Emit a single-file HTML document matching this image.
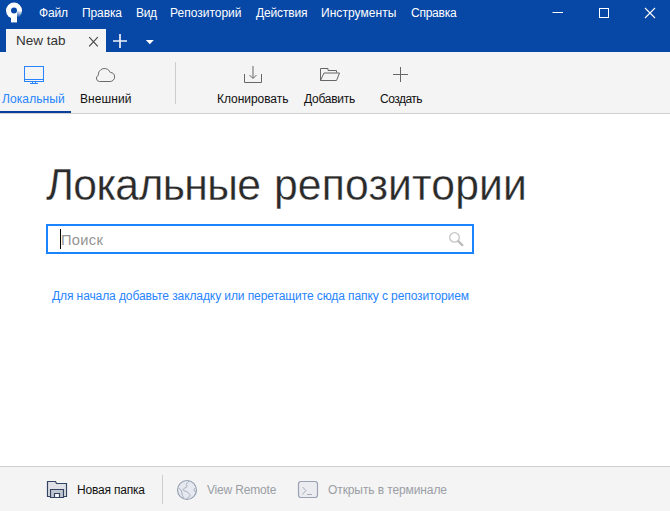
<!DOCTYPE html>
<html lang="ru"><head><meta charset="utf-8"><title>Sourcetree</title>
<style>
html,body{margin:0;padding:0;}
body{width:670px;height:511px;overflow:hidden;background:#fff;font-family:"Liberation Sans",sans-serif;font-size:12px;color:#222;position:relative;}
.abs{position:absolute;white-space:nowrap;}
#title{left:0;top:0;width:670px;height:52px;background:#0747a6;}
.menu{color:#fff;font-size:12px;top:6px;line-height:14px;}
#tab{left:6px;top:29px;width:100px;height:23px;background:#f4f4f4;}
#toolbar{left:0;top:52px;width:670px;height:61px;background:#f4f4f4;border-bottom:1px solid #cfcfcf;}
.tl{font-size:12px;line-height:14px;top:92px;color:#111;}
.h1{top:160px;font-size:42.670px;line-height:50px;color:#2a2a2a;-webkit-text-stroke:0.300px #fff;transform:scaleY(1.035);transform-origin:0 40px;}
#bottom{left:0;top:466px;width:670px;height:45px;background:#f4f4f4;border-top:1px solid #cfcfcf;}
.bt{top:483px;font-size:12px;line-height:14px;}
</style></head><body>
<div id="title" class="abs"></div>
<svg class="abs" style="left:0;top:0" width="30" height="28" viewBox="0 0 30 28">
<defs><linearGradient id="lg" gradientUnits="userSpaceOnUse" x1="19.500" y1="10.500" x2="17.500" y2="17.500"><stop offset="0" stop-color="#0747a6" stop-opacity="0"/><stop offset="1" stop-color="#0747a6" stop-opacity="1"/></linearGradient></defs>
<circle cx="14" cy="10.600" r="8" fill="#fff"/>
<path d="M14 10.600H23V20H14z" fill="url(#lg)"/>
<rect x="11" y="12" width="6" height="10.400" fill="#fff"/>
<circle cx="14" cy="10.400" r="3" fill="#0747a6"/>
</svg>
<div class="abs menu" style="left:39px;letter-spacing:-0.200px">Файл</div>
<div class="abs menu" style="left:82px;letter-spacing:-0.100px">Правка</div>
<div class="abs menu" style="left:136px;letter-spacing:-0.300px">Вид</div>
<div class="abs menu" style="left:170px">Репозиторий</div>
<div class="abs menu" style="left:256px;letter-spacing:-0.150px">Действия</div>
<div class="abs menu" style="left:321px;letter-spacing:0.050px">Инструменты</div>
<div class="abs menu" style="left:411px;letter-spacing:-0.250px">Справка</div>
<svg class="abs" style="left:540px;top:0" width="130" height="28" viewBox="0 0 130 28" fill="none" stroke="#fff" stroke-width="1"><path d="M12.500 12.500h10.500"/><rect x="59.500" y="8.500" width="9" height="9"/><path d="M105 8l10 10M115 8l-10 10" stroke-width="1.100"/></svg>
<div id="tab" class="abs"></div>
<div class="abs" style="left:16px;top:33px;font-size:13.500px;line-height:16px;color:#333">New tab</div>
<svg class="abs" style="left:80px;top:29px" width="80" height="23" viewBox="80 29 80 23" fill="none"><path d="M89.200 37.200l8.600 9.200M97.800 37.200l-8.600 9.200" stroke="#4a4a4a" stroke-width="1.200"/><path d="M113 41h14M120 34v14" stroke="#eef2fa" stroke-width="1.700"/><path d="M145.800 40h8l-4 4.300z" fill="#fff"/></svg>

<div id="toolbar" class="abs"></div>
<div class="abs" style="left:0;top:111px;width:71px;height:2px;background:#0a3f9e"></div>
<div class="abs" style="left:175px;top:62px;width:1px;height:42px;background:#ccc"></div>
<svg class="abs" style="left:0;top:56px" width="440" height="34" viewBox="0 56 440 34" fill="none" stroke="#666" stroke-width="1">
<g stroke="#2684ff"><rect x="24.500" y="66.500" width="19" height="15"/><path d="M24.500 79.500h19M30 83.500h8M32.500 81.500v2M35.500 81.500v2"/></g>
<path d="M99.600 81.500H110.100A4.500 4.500 0 0 0 114.600 77A4.500 4.500 0 0 0 110.30 72.50A6.200 6.200 0 0 0 98.34 75.36A3.200 3.200 0 0 0 99.600 81.500z" stroke="#6a6a6a"/>
<path d="M244.500 74v8.500h17V74M253 66v12" /><path d="M249.500 75l3.500 3.500l3.500-3.500"/>
<path d="M320.500 80.500V68.500H328V70.500H336.500V72.500"/><path d="M320.500 80.500L324 73H339.500L336.500 80.500z"/>
<path d="M393 74.500h15M400.500 67v15"/>
</svg>
<div class="abs tl" style="left:2px;color:#2684ff;letter-spacing:0.100px">Локальный</div>
<div class="abs tl" style="left:80px;letter-spacing:0.100px">Внешний</div>
<div class="abs tl" style="left:217px;letter-spacing:-0.050px">Клонировать</div>
<div class="abs tl" style="left:304px;letter-spacing:-0.250px">Добавить</div>
<div class="abs tl" style="left:380px;letter-spacing:-0.500px">Создать</div>

<div class="abs h1" style="left:46px;letter-spacing:-0.650px">Локальные</div>
<div class="abs h1" style="left:274px;letter-spacing:0.150px">репозитории</div>
<div class="abs" style="left:46px;top:224px;width:424px;height:26px;border:2px solid #1a84ff;background:#fff"></div>
<div class="abs" style="left:60px;top:229px;width:1px;height:20px;background:#000"></div>
<div class="abs" style="left:61px;top:231px;font-size:14.670px;line-height:18px;color:#959595;letter-spacing:0.300px">Поиск</div>
<svg class="abs" style="left:444px;top:228px" width="24" height="22" viewBox="444 228 24 22" fill="none"><circle cx="454.500" cy="237.400" r="4.800" stroke="#c4c4c4" stroke-width="1.300"/><path d="M458.500 241.300l3.800 3.800" stroke="#bdbdbd" stroke-width="2.400" stroke-linecap="round"/></svg>
<div class="abs" style="left:52px;top:289px;font-size:12px;line-height:14px;color:#2684ff;letter-spacing:-0.090px">Для начала добавьте закладку или перетащите сюда папку с репозиторием</div>

<div id="bottom" class="abs"></div>
<svg class="abs" style="left:40px;top:474px" width="290" height="32" viewBox="40 474 290 32" fill="none" stroke-width="1">
<g stroke="#344563" stroke-width="1.200"><path d="M50.500 496.500H47.500V481.500H55.500L56.500 483.500H66.500V496.500H63.500" fill="#dfe1e6"/><path d="M50.500 497.500V489.500H63.500V497.500z" fill="#c1c7d0"/><path d="M54.500 497.500V493.500H59.500V497.500z" fill="#fafafa"/></g>
<g stroke="#a5adba"><circle cx="187" cy="490" r="9.500" fill="#e6e9ef" stroke="#98a2b3" stroke-width="1.150"/><path d="M189 481c-.5 1.800-2.500 2-3 3s1.800 1.200 1 2.500s-4 2-4 3.300s3.800 1.200 5 2.700s2 2 2 3s-1.800 1.500-2.500 2.500s-1 1.300-1.500 1.500M178.500 487.500c.5 1.500 2.500 2 3 3.500s.3 3 1 4.500s1.200 2 1.700 2.700M195.500 487.500c-1 .8-1.500 2-1.300 3s1 1.500 1.800 1.700"/>
<rect x="298.500" y="481.500" width="19" height="16" rx="2.500" fill="#ebecf0" stroke="#98a2b3" stroke-width="1.200"/><path d="M302.500 487l3.500 3.600l-3.500 3.900M307 494.500h5"/></g>
</svg>
<div class="abs bt" style="left:77px;color:#111;letter-spacing:-0.200px">Новая папка</div>
<div class="abs" style="left:162px;top:475px;width:1px;height:29px;background:#ccc"></div>
<div class="abs bt" style="left:207px;color:#9a9ea5;letter-spacing:-0.180px">View Remote</div>
<div class="abs bt" style="left:328px;color:#9a9ea5;letter-spacing:-0.100px">Открыть в терминале</div>
</body></html>
